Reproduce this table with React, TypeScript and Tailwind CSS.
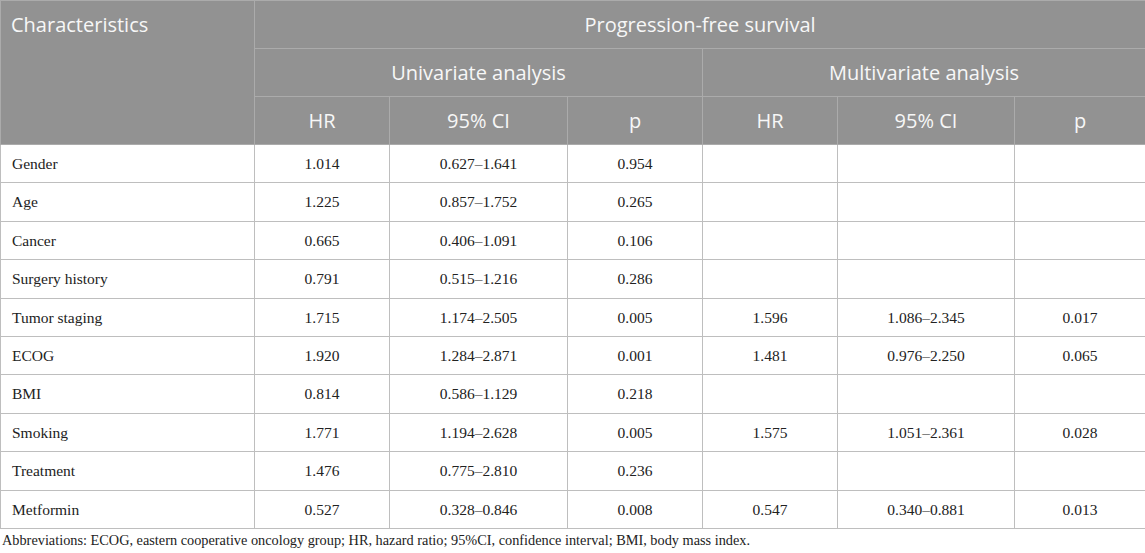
import React from "react";

const rows: [string, string, string, string, string, string, string][] = [
  ["Gender", "1.014", "0.627–1.641", "0.954", "", "", ""],
  ["Age", "1.225", "0.857–1.752", "0.265", "", "", ""],
  ["Cancer", "0.665", "0.406–1.091", "0.106", "", "", ""],
  ["Surgery history", "0.791", "0.515–1.216", "0.286", "", "", ""],
  ["Tumor staging", "1.715", "1.174–2.505", "0.005", "1.596", "1.086–2.345", "0.017"],
  ["ECOG", "1.920", "1.284–2.871", "0.001", "1.481", "0.976–2.250", "0.065"],
  ["BMI", "0.814", "0.586–1.129", "0.218", "", "", ""],
  ["Smoking", "1.771", "1.194–2.628", "0.005", "1.575", "1.051–2.361", "0.028"],
  ["Treatment", "1.476", "0.775–2.810", "0.236", "", "", ""],
  ["Metformin", "0.527", "0.328–0.846", "0.008", "0.547", "0.340–0.881", "0.013"],
];

const th =
  "border border-[#ababab] bg-[#929292] text-[#f7f7f7] font-normal text-[20px] text-center align-middle p-0";
const td =
  "border border-[#bebebe] text-center align-middle p-0 text-[15.5px] text-[#222]";

export default function App() {
  return (
    <div className="w-[1145px] bg-white">
      <table className="w-[1145px] table-fixed border-collapse">
        <colgroup>
          <col className="w-[254px]" />
          <col className="w-[135px]" />
          <col className="w-[178px]" />
          <col className="w-[135px]" />
          <col className="w-[135px]" />
          <col className="w-[177px]" />
          <col className="w-[131px]" />
        </colgroup>
        <thead style={{ fontFamily: '"Open Sans", "Noto Sans", sans-serif' }}>
          <tr className="h-[48px]">
            <th rowSpan={3} className={th + " !text-left !align-top pl-[10px] pt-[9px]"}>
              Characteristics
            </th>
            <th colSpan={6} className={th}>
              Progression-free survival
            </th>
          </tr>
          <tr className="h-[48px]">
            <th colSpan={3} className={th}>
              Univariate analysis
            </th>
            <th colSpan={3} className={th}>
              Multivariate analysis
            </th>
          </tr>
          <tr className="h-[48px]">
            <th className={th}>HR</th>
            <th className={th}>95% CI</th>
            <th className={th}>p</th>
            <th className={th}>HR</th>
            <th className={th}>95% CI</th>
            <th className={th}>p</th>
          </tr>
        </thead>
        <tbody style={{ fontFamily: '"Liberation Serif", "Times New Roman", serif' }}>
          {rows.map((r) => (
            <tr key={r[0]} className="h-[38.4px]">
              <td className={td + " !text-left pl-[11px]"}>{r[0]}</td>
              {r.slice(1).map((c, i) => (
                <td key={i} className={td}>
                  {c}
                </td>
              ))}
            </tr>
          ))}
        </tbody>
      </table>
      <p
        className="text-[14.3px] text-[#222] pl-[2px] pt-[2px] leading-[18px]"
        style={{ fontFamily: '"Liberation Serif", "Times New Roman", serif' }}
      >
        Abbreviations: ECOG, eastern cooperative oncology group; HR, hazard ratio; 95%CI, confidence interval; BMI, body mass index.
      </p>
    </div>
  );
}
